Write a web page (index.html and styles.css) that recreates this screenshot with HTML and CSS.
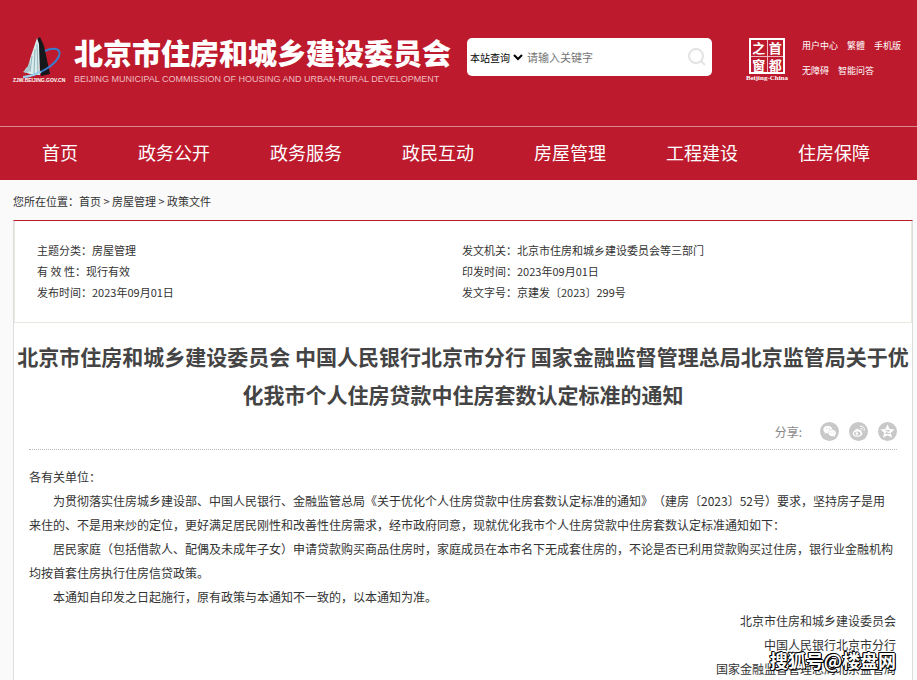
FILE: index.html
```html
<!DOCTYPE html>
<html lang="zh-CN">
<head>
<meta charset="utf-8">
<title>北京市住房和城乡建设委员会</title>
<link rel="stylesheet" href="styles.css">
</head>
<body>
<header class="header">
  <div class="masthead">
    <a class="brand" href="#">
      <svg class="emblem" viewBox="0 0 56 50" aria-hidden="true">
        <path d="M24 3 27 1 31 10 37 38 28 40 25 20Z" fill="#15171b"/>
        <path d="M24 2 26 8 27 39 20 39 11 36 13 32 16 30 17 23 20 14Z" fill="#d9eced"/>
        <path d="M19 20 17 36M22 13 21 37M24 8 25 37" stroke="#8fb4ba" fill="none"/>
        <path d="M17 24 14 32 10 36 14 37 17 34Z" fill="#a7c9cc"/>
        <path d="M32 15C40 11 49 12 46 20C42 29 28 38 12 41" fill="none" stroke="#397ccb" stroke-width="2"/>
        <path d="M28 36Q20 40 10 41" fill="none" stroke="#9fd0e9" stroke-width="2"/>
        <text x="0" y="46" class="emblem-text">ZJW.BEIJING.GOV.CN</text>
      </svg>
      <span class="brand-words">
        <span class="brand-name">北京市住房和城乡建设委员会</span>
        <span class="brand-en">BEIJING MUNICIPAL COMMISSION OF HOUSING AND URBAN-RURAL DEVELOPMENT</span>
      </span>
    </a>
    <form class="search">
      <span class="scope">
        <select aria-label="查询范围"><option>本站查询</option></select>
        <svg viewBox="0 0 10 8" aria-hidden="true"><path d="M1 2 5 6 9 2" fill="none" stroke="#000" stroke-width="2"/></svg>
      </span>
      <input type="text" placeholder="请输入关键字" aria-label="关键字">
      <button type="button" aria-label="搜索"><svg viewBox="0 0 18 18"><circle cx="8" cy="8" r="7"/><path d="M13 13 17 17"/></svg></button>
    </form>
    <a class="capital" href="#">
      <span class="seal"><span>之</span><span>首</span><span>窗</span><span>都</span></span>
      <span class="seal-en">Beijing-China</span>
    </a>
    <div class="tools">
      <p><a href="#">用户中心</a><a href="#">繁體</a><a href="#">手机版</a></p>
      <p><a href="#">无障碍</a><a href="#">智能问答</a></p>
    </div>
  </div>
  <nav class="nav">
    <a href="#">首页</a><a href="#">政务公开</a><a href="#">政务服务</a><a href="#">政民互动</a><a href="#">房屋管理</a><a href="#">工程建设</a><a href="#">住房保障</a>
  </nav>
</header>
<div class="crumbs">您所在位置：<a href="#">首页</a> &gt; <a href="#">房屋管理</a> &gt; <a href="#">政策文件</a></div>
<main class="sheet">
  <div class="meta">
    <ul>
      <li>主题分类：房屋管理</li>
      <li>有 效 性：现行有效</li>
      <li>发布时间：2023年09月01日</li>
    </ul>
    <ul>
      <li>发文机关：北京市住房和城乡建设委员会等三部门</li>
      <li>印发时间：2023年09月01日</li>
      <li>发文字号：京建发〔2023〕299号</li>
    </ul>
  </div>
  <h1>北京市住房和城乡建设委员会 中国人民银行北京市分行 国家金融监督管理总局北京监管局关于优化我市个人住房贷款中住房套数认定标准的通知</h1>
  <div class="share">
    <span>分享:</span>
    <a href="#" aria-label="微信"><svg viewBox="0 0 20 20"><circle class="disc" cx="10" cy="10" r="10"/><path d="M8.200 4C5.600 4 3.500 5.700 3.500 7.900c0 1.300.7 2.300 1.700 3L4.800 12.600l1.800-1 2 .2c.1-2.500 2-4.100 4.400-4.100C12.500 5.400 10.500 4 8.200 4Z"/><path d="M12.800 8.200c-2.300 0-4 1.500-4 3.400s1.700 3.400 4 3.400l1.300-.2 1.700.9-.4-1.500c.9-.6 1.400-1.500 1.400-2.600 0-1.900-1.700-3.400-4-3.400Z"/><g class="disc"><circle cx="6.800" cy="7.100" r=".6"/><circle cx="9.800" cy="7.100" r=".6"/><circle cx="11.600" cy="10.700" r=".5"/><circle cx="14.200" cy="10.700" r=".5"/></g></svg></a>
    <a href="#" aria-label="微博"><svg viewBox="0 0 20 20"><circle class="disc" cx="10" cy="10" r="10"/><path d="M12.500 9.500c.4-1.300-.8-1.800-2.600-1 .4-1.300-.6-1.800-2.200-.9-1.900 1-3.900 3-3.900 4.800 0 1.900 2.400 3.100 4.900 3.100 3 0 5.400-1.700 5.400-3.500 0-1.200-.6-2-1.600-2.500Z"/><ellipse class="disc" cx="8.700" cy="12.100" rx="3.400" ry="2.200"/><circle cx="8.300" cy="12.200" r="1.400"/><path class="arc" d="M11.500 4.600c2.900-.8 5.400 1.600 4.500 4.600M12.100 6.800c1.300-.3 2.200.5 1.900 1.800"/></svg></a>
    <a href="#" aria-label="QQ空间"><svg viewBox="0 0 20 20"><circle class="disc" cx="10" cy="10" r="10"/><path d="m10 2.500 2.200 4.900 5.300.5-4 3.500 1.200 5.200L10 13.900l-4.700 2.700 1.200-5.200-4-3.500 5.300-.5Z"/><path class="zee" d="M7.500 8.800h4.800l-4.500 3.300h5"/></svg></a>
  </div>
  <article class="article">
    <p class="lead">各有关单位：</p>
    <p>为贯彻落实住房城乡建设部、中国人民银行、金融监管总局《关于优化个人住房贷款中住房套数认定标准的通知》（建房〔2023〕52号）要求，坚持房子是用来住的、不是用来炒的定位，更好满足居民刚性和改善性住房需求，经市政府同意，现就优化我市个人住房贷款中住房套数认定标准通知如下：</p>
    <p>居民家庭（包括借款人、配偶及未成年子女）申请贷款购买商品住房时，家庭成员在本市名下无成套住房的，不论是否已利用贷款购买过住房，银行业金融机构均按首套住房执行住房信贷政策。</p>
    <p>本通知自印发之日起施行，原有政策与本通知不一致的，以本通知为准。</p>
    <p class="sign">北京市住房和城乡建设委员会</p>
    <p class="sign">中国人民银行北京市分行</p>
    <p class="sign">国家金融监督管理总局北京监管局</p>
  </article>
</main>
<div class="watermark">搜狐号@楼盘网</div>
</body>
</html>
```
FILE: styles.css
```css
* { box-sizing: border-box; }
body {
  margin: 0;
  height: 100vh;
  overflow: hidden;
  position: relative;
  background: #fafafa;
  color: #333;
  font: 11px/21px "Noto Sans CJK SC", sans-serif;
  text-spacing-trim: space-all;
}
a { color: inherit; text-decoration: none; }
p, ul, h1 { margin: 0; padding: 0; }
li { list-style: none; }

.header { background: #bd1a2d; color: #fff; }
.masthead {
  display: flex;
  align-items: flex-start;
  height: 126px;
  padding: 36px 13px 0;
}
.brand { display: flex; flex: none; width: 454px; }
.emblem { width: 56px; height: 50px; margin-right: 5px; overflow: visible; }
.emblem-text { font: bold 5px "Liberation Sans", sans-serif; fill: #fff; }
.brand-words { display: flex; flex-direction: column; white-space: nowrap; }
.brand-name { font-size: 29px; font-weight: 900; line-height: 32px; }
.brand-en { font: 9px/22px "Liberation Sans", sans-serif; color: #f0bcc2; }

.search {
  display: flex;
  align-items: center;
  flex: none;
  width: 245px;
  height: 38px;
  margin-top: 2px;
  padding: 0 6px 0 3px;
  background: #fff;
  border-radius: 5px;
}
.scope { display: flex; align-items: center; }
.scope svg { width: 10px; height: 8px; margin: 0 4px 0 3px; }
.search select, .search input, .search button {
  appearance: none;
  border: 0;
  margin: 0;
  padding: 0;
  background: none;
  font: inherit;
}
.search select { font-size: 10px; color: #000; }
.search input { flex: 1; min-width: 0; outline: 0; }
.search input::placeholder { color: #757575; }
.search button { height: 18px; }
.search button svg { width: 18px; height: 18px; fill: none; stroke: #e3e3e3; stroke-width: 2; display: block; }

.capital {
  display: flex;
  flex-direction: column;
  align-items: center;
  flex: none;
  width: 42px;
  margin: 2px 14px 0 34px;
}
.seal {
  display: grid;
  grid-template-columns: 1fr 1fr;
  gap: 1px;
  width: 36px;
  height: 36px;
  border: 2px solid #fff;
  background: #f0bcc2;
}
.seal span {
  background: #bd1a2d;
  font: bold 13px/15px "Noto Sans CJK SC", serif;
  text-align: center;
}
.seal-en { font: bold 7px/8px "Liberation Serif", serif; white-space: nowrap; }

.tools { font-size: 9px; line-height: 25px; white-space: nowrap; margin-top: -3px; }
.tools a { margin-right: 9px; }

.nav {
  display: flex;
  gap: 60px;
  padding: 0 42px 2px;
  border-top: 1px solid #d98791;
  font-size: 18px;
  line-height: 51px;
  white-space: nowrap;
}

.crumbs { padding: 11px 13px 8px; }
.sheet {
  margin: 0 4px 0 13px;
  background: #fff;
  border: 1px solid #ddd;
  border-top-color: #bd1a2d;
}
.meta {
  display: grid;
  grid-template-columns: 425px 1fr;
  padding: 19px 22px;
  border: 1px solid #e8e8df;
  border-top: 0;
}
h1 {
  padding: 14px 0 0;
  font-size: 21px;
  line-height: 38px;
  color: #444;
  text-align: center;
}
.share {
  display: flex;
  justify-content: flex-end;
  align-items: center;
  gap: 10px;
  height: 37px;
  margin: 0 15px;
  border-bottom: 1px dotted #bbb;
  font-size: 12px;
  color: #888;
}
.share span { margin-right: 8px; }
.share svg { display: block; width: 19px; height: 19px; fill: #fff; }
.share .disc { fill: #c8c8c8; }
.share .arc { fill: none; stroke: #fff; }
.share .zee { fill: none; stroke: #c8c8c8; }

.article { padding: 15px 16px 15px 15px; font-size: 12px; line-height: 24px; }
.article p { text-indent: 2em; }
.article .lead { text-indent: 0; }
.article .sign { text-indent: 0; text-align: right; }

.watermark {
  position: absolute;
  right: 21px;
  bottom: 8px;
  font-size: 18px;
  font-weight: 700;
  line-height: 24px;
  color: #fff;
  text-shadow: 1px 0 #000, -1px 0 #000, 0 1px #000, 0 -1px #000, 1px 1px #000, -1px -1px #000;
}
```
